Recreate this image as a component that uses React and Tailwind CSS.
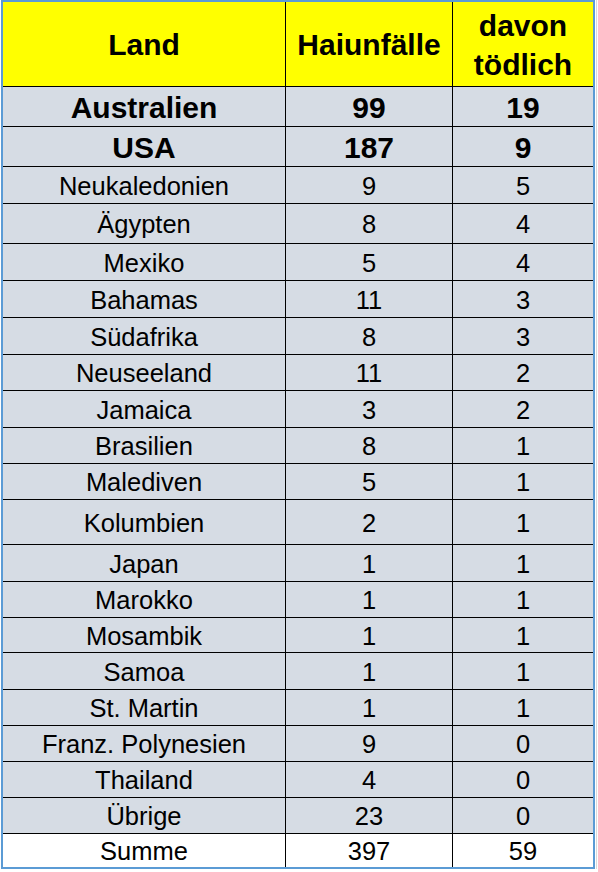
import React from 'react';

const rows = [
  { land: 'Australien', faelle: '99', tod: '19', bold: true, h: 'h-[40px]' },
  { land: 'USA', faelle: '187', tod: '9', bold: true, h: 'h-[40px]' },
  { land: 'Neukaledonien', faelle: '9', tod: '5', h: 'h-[37px]' },
  { land: 'Ägypten', faelle: '8', tod: '4', h: 'h-[40px]' },
  { land: 'Mexiko', faelle: '5', tod: '4', h: 'h-[37px]' },
  { land: 'Bahamas', faelle: '11', tod: '3', h: 'h-[37px]' },
  { land: 'Südafrika', faelle: '8', tod: '3', h: 'h-[37px]' },
  { land: 'Neuseeland', faelle: '11', tod: '2', h: 'h-[36px]' },
  { land: 'Jamaica', faelle: '3', tod: '2', h: 'h-[37px]' },
  { land: 'Brasilien', faelle: '8', tod: '1', h: 'h-[36px]' },
  { land: 'Malediven', faelle: '5', tod: '1', h: 'h-[36px]' },
  { land: 'Kolumbien', faelle: '2', tod: '1', h: 'h-[45px]' },
  { land: 'Japan', faelle: '1', tod: '1', h: 'h-[37px]' },
  { land: 'Marokko', faelle: '1', tod: '1', h: 'h-[36px]' },
  { land: 'Mosambik', faelle: '1', tod: '1', h: 'h-[35px]' },
  { land: 'Samoa', faelle: '1', tod: '1', h: 'h-[37px]' },
  { land: 'St. Martin', faelle: '1', tod: '1', h: 'h-[36px]' },
  { land: 'Franz. Polynesien', faelle: '9', tod: '0', h: 'h-[36px]' },
  { land: 'Thailand', faelle: '4', tod: '0', h: 'h-[36px]' },
  { land: 'Übrige', faelle: '23', tod: '0', h: 'h-[36px]' },
];

function Row({ r }) {
  const text = r.bold ? 'text-[30px] font-bold' : 'text-[25.5px]';
  return (
    <div className={`flex border-b border-black bg-[#d6dce4] ${r.h} ${text}`}>
      <div className="flex w-[283px] items-center justify-center border-r border-black pt-[2px]">{r.land}</div>
      <div className="flex w-[167px] items-center justify-center border-r border-black pt-[2px]">{r.faelle}</div>
      <div className="flex w-[140px] items-center justify-center pt-[2px]">{r.tod}</div>
    </div>
  );
}

export default function App() {
  return (
    <div className="flex bg-white text-black" style={{ fontFamily: '"Liberation Sans", Arial, sans-serif' }}>
      <div className="ml-px w-[594px] border-2 border-[#5b9bd5]">
        <div className="flex h-[85px] border-b border-black bg-[#ffff00] text-[30px] font-bold">
          <div className="flex w-[283px] items-center justify-center border-r border-black pt-px">Land</div>
          <div className="flex w-[167px] items-center justify-center border-r border-black pt-px">Haiunfälle</div>
          <div className="flex w-[140px] items-center justify-center pt-px text-center leading-[39px]">
            davon
            <br />
            tödlich
          </div>
        </div>
        {rows.map((r) => (
          <Row key={r.land} r={r} />
        ))}
        <div className="flex h-[33px] bg-white text-[25.5px]">
          <div className="flex w-[283px] items-center justify-center border-r border-black pt-px">Summe</div>
          <div className="flex w-[167px] items-center justify-center border-r border-black pt-px">397</div>
          <div className="flex w-[140px] items-center justify-center pt-px">59</div>
        </div>
      </div>
      <div className="ml-px w-px self-stretch bg-[#d9d9d9]" />
    </div>
  );
}
